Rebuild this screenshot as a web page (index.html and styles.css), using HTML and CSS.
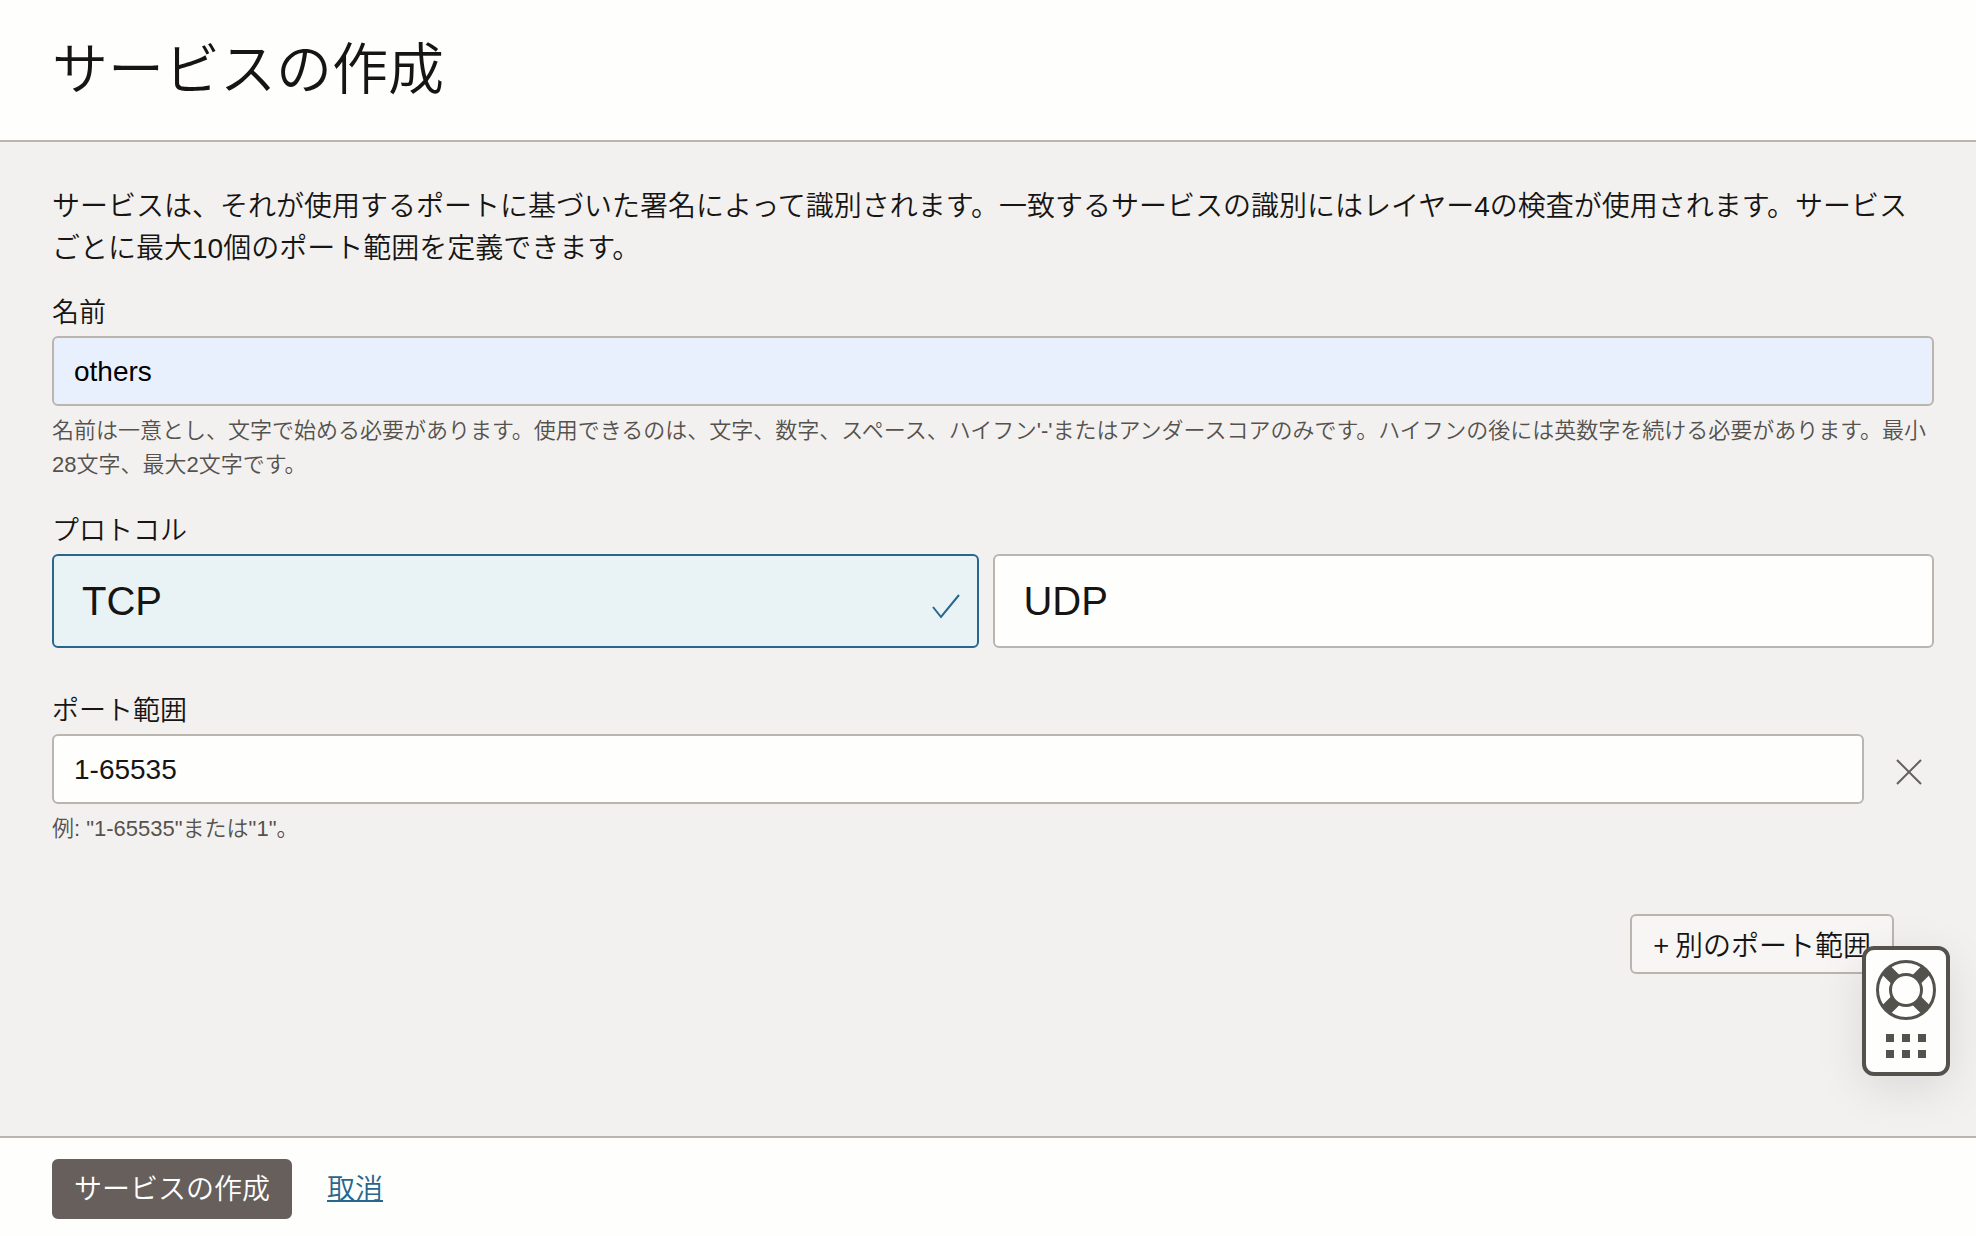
FILE: index.html
```html
<!DOCTYPE html>
<html lang="ja">
<head>
<meta charset="utf-8">
<meta name="viewport" content="width=device-width, initial-scale=1">
<title>サービスの作成</title>
<link rel="stylesheet" href="styles.css">
</head>
<body>
<form class="panel">
  <header class="panel-header">
    <h1 class="panel-title">サービスの作成</h1>
  </header>

  <main class="panel-body">
    <p class="intro">サービスは、それが使用するポートに基づいた署名によって識別されます。一致するサービスの識別にはレイヤー4の検査が使用されます。サービスごとに最大10個のポート範囲を定義できます。</p>

    <div class="field">
      <label class="field-label" for="name">名前</label>
      <input class="text-input text-input-filled" id="name" type="text" value="others" aria-describedby="name-hint">
      <p class="hint" id="name-hint">名前は一意とし、文字で始める必要があります。使用できるのは、文字、数字、スペース、ハイフン'-'またはアンダースコアのみです。ハイフンの後には英数字を続ける必要があります。最小28文字、最大2文字です。</p>
    </div>

    <fieldset class="field protocol">
      <legend class="field-label">プロトコル</legend>
      <div class="cards">
        <label class="card card-tcp">
          <input class="card-radio" type="radio" name="protocol" value="tcp" checked>
          <span class="card-text">TCP</span>
          <svg class="card-check" width="28" height="28" viewBox="0 0 28 28" aria-hidden="true"><path d="M1 15 9 25 27 3" fill="none" stroke="currentColor" stroke-width="2"/></svg>
        </label>
        <label class="card card-udp">
          <input class="card-radio" type="radio" name="protocol" value="udp">
          <span class="card-text">UDP</span>
          <svg class="card-check" width="28" height="28" viewBox="0 0 28 28" aria-hidden="true"><path d="M1 15 9 25 27 3" fill="none" stroke="currentColor" stroke-width="2"/></svg>
        </label>
      </div>
    </fieldset>

    <div class="field">
      <label class="field-label" for="port">ポート範囲</label>
      <div class="port-row">
        <input class="text-input" id="port" type="text" value="1-65535" aria-describedby="port-hint">
        <button class="remove" type="button" aria-label="削除">
          <svg width="26" height="26" viewBox="0 0 26 26" aria-hidden="true"><path d="M1 1 25 25M25 1 1 25" fill="none" stroke="currentColor" stroke-width="2"/></svg>
        </button>
      </div>
      <p class="hint" id="port-hint">例: "1-65535"または"1"。</p>
    </div>

    <div class="add-row">
      <button class="button button-outline" type="button">+ 別のポート範囲</button>
    </div>
  </main>

  <footer class="panel-footer">
    <button class="button button-primary" type="submit">サービスの作成</button>
    <a class="cancel" href="#">取消</a>
  </footer>
</form>

<button class="help" type="button" aria-label="ヘルプ">
  <svg width="60" height="60" viewBox="0 0 60 60" aria-hidden="true">
    <g fill="none" stroke="currentColor">
      <circle cx="30" cy="30" r="28.5" stroke-width="3"/>
      <circle cx="30" cy="30" r="15.5" stroke-width="3"/>
      <path stroke-width="12" d="M10.5 10.5 19.5 19.5M49.5 10.5 40.5 19.5M10.5 49.5 19.5 40.5M49.5 49.5 40.5 40.5"/>
    </g>
  </svg>
  <svg width="40" height="24" viewBox="0 0 40 24" fill="currentColor" aria-hidden="true">
    <path d="M0 0h8v8H0zM16 0h8v8h-8zM32 0h8v8h-8zM0 16h8v8H0zM16 16h8v8h-8zM32 16h8v8h-8z"/>
  </svg>
</button>
</body>
</html>
```
FILE: styles.css
```css
*, *::before, *::after {
  box-sizing: border-box;
}

body {
  margin: 0;
  background: #f3f1f0;
  color: #161513;
  font: 350 28px/42px "Liberation Sans", "Noto Sans CJK JP", sans-serif;
}

button, input {
  font: inherit;
  color: inherit;
}

.panel {
  display: flex;
  flex-direction: column;
  min-height: 100vh;
}

.panel-header {
  padding: 34px 52px;
  background: #fefefd;
  border-bottom: 2px solid #bbb5b0;
}

.panel-title {
  margin: 0;
  font-size: 56px;
  line-height: 72px;
  font-weight: 350;
}

.panel-body {
  flex: 1;
  padding: 44px 42px 0 52px;
}

.intro {
  margin: 0 0 22px;
}

.field {
  min-width: 0;
  margin: 0;
  padding: 0;
  border: 0;
}

.field-label {
  display: block;
  padding: 0;
  height: 44px;
  font-size: 27px;
  line-height: 42px;
}

.text-input {
  display: block;
  width: 100%;
  height: 70px;
  padding: 2px 20px 0;
  border: 2px solid #bbb5b0;
  border-radius: 6px;
  background: #fefefd;
}

.text-input-filled {
  background: #e8f0fe;
  color: #000;
}

.hint {
  margin: 8px -8px 0 0;
  color: #55524e;
  font-size: 22px;
  line-height: 34px;
}

.protocol {
  margin: 28px 0 42px;
}

.cards {
  display: flex;
  gap: 14px;
}

.card {
  position: relative;
  display: flex;
  align-items: center;
  justify-content: space-between;
  height: 94px;
  padding: 0 17px 0 28px;
  border: 2px solid #bbb5b0;
  border-radius: 6px;
  background: #fefefd;
  font-size: 40px;
}

.card-tcp {
  flex: 927 1 0;
}

.card-udp {
  flex: 941 1 0;
}

.card-radio {
  position: absolute;
  inset: 0;
  width: 100%;
  height: 100%;
  margin: 0;
  opacity: 0;
}

.card-check {
  margin-top: 10px;
  color: #27668d;
  visibility: hidden;
}

.card:has(:checked) {
  border-color: #27668d;
  background: #e9f2f5;
}

.card-radio:checked ~ .card-check {
  visibility: visible;
}

.port-row {
  display: flex;
  gap: 32px;
}

.remove {
  flex: none;
  padding: 6px 12px 0 0;
  border: 0;
  background: none;
  color: #66605c;
}

.remove svg, .help svg {
  display: block;
}

.add-row {
  display: flex;
  justify-content: flex-end;
  padding: 68px 40px 40px 0;
}

.button {
  height: 60px;
  padding: 2px 20px 0;
  border: 2px solid transparent;
  border-radius: 6px;
}

.button-outline {
  padding: 0 21px;
  border-color: #bbb5b0;
  background: #f7f6f5;
  font-family: "Noto Sans CJK JP", sans-serif;
}

.button-primary {
  border-color: #665f5b;
  background: #665f5b;
  color: #fff;
}

.panel-footer {
  display: flex;
  align-items: center;
  gap: 35px;
  height: 100px;
  padding: 4px 52px 0;
  border-top: 2px solid #bbb5b0;
  background: #fefefd;
}

.cancel {
  padding-top: 2px;
  color: #27668d;
  text-decoration-thickness: 2px;
}

.help {
  position: fixed;
  right: 26px;
  bottom: 160px;
  display: flex;
  flex-direction: column;
  align-items: center;
  gap: 14px;
  padding: 10px 10px 14px;
  border: 4px solid #54524d;
  border-radius: 12px;
  background: #fefefd;
  color: #54524d;
  box-shadow: 0 12px 48px rgba(0, 0, 0, 0.1);
}
```
